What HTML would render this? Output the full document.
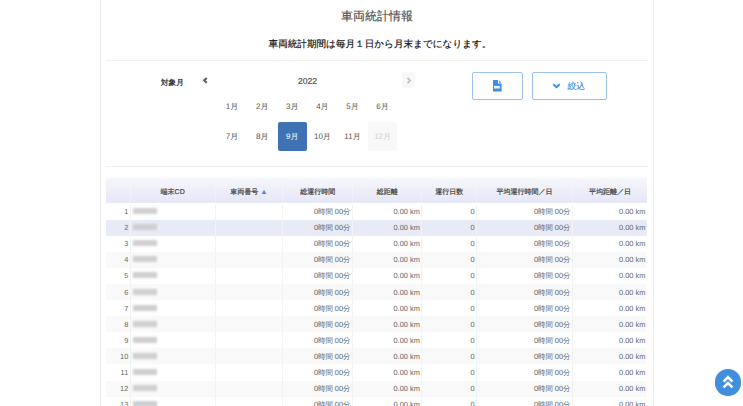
<!DOCTYPE html><html><head><meta charset="utf-8"><style>
*{box-sizing:border-box;margin:0;padding:0}
html,body{width:743px;height:406px;overflow:hidden;background:#fff;text-rendering:geometricPrecision;font-family:"Liberation Sans",sans-serif;position:relative}
.card{position:absolute;left:100px;top:-10px;width:554px;height:430px;border-left:1px solid #ebebeb;border-right:1px solid #ebebeb}
.abs{position:absolute;white-space:nowrap}
.title{left:100px;width:554px;text-align:center;top:8px;font-size:12px;color:#4d4d4d;-webkit-text-stroke:0.15px #4d4d4d;line-height:16px}
.sub{left:103px;width:554px;text-align:center;top:37.5px;font-size:9.6px;color:#111;-webkit-text-stroke:0.18px #111;line-height:13px}
.hr{position:absolute;left:106px;width:542px;height:1px;background:#eee}
.lbl{font-size:7.6px;font-weight:bold;color:#3a3a3a;line-height:10px}
.yr{font-size:8.6px;color:#555;-webkit-text-stroke:0.2px #555;line-height:10px}
.mo{position:absolute;width:29px;height:29px;border-radius:2px;font-size:8px;color:#555;text-align:center;line-height:29px}
.mo.sel{background:#3f72b3;color:#fff}
.mo.dis{background:#f8f8f8;color:#d2d2d2}
.btn{position:absolute;top:72px;height:27.5px;border:1px solid #9cc3ec;border-radius:2px;background:#fff}
.th{position:absolute;top:178.4px;height:25.1px;background:linear-gradient(#f6f6fc,#e6e7f7);font-size:7px;color:#4a4a4a;-webkit-text-stroke:0.22px #4a4a4a;text-align:center;}
.hsep{position:absolute;width:1px;background:linear-gradient(#f8f8fc,#ececf8)}
.td{position:absolute;font-size:7.4px;color:#666;text-align:right;padding-right:2px}
.sep{position:absolute;width:1px;background:#f3f3f3}
.tri{color:#3a8ee6;font-size:7.4px;line-height:1px;-webkit-text-stroke:0}
.blur{position:absolute;left:2.5px;top:4.1px;width:24px;height:6px;filter:blur(0.9px);background:#cfcfd1}
</style></head><body><div class="card"></div>
<div class="abs title">車両統計情報</div>
<div class="abs sub">車両統計期間は毎月１日から月末までになります。</div>
<div class="hr" style="top:59.6px;height:1.3px;background:#f0f0f0"></div>
<div class="hr" style="top:165.8px;height:1.3px;background:#f0f0f0"></div>
<div class="abs lbl" style="left:161px;top:78.2px">対象月</div>
<svg class="abs" style="left:202px;top:77px" width="7" height="7" viewBox="0 0 7 7"><path d="M4.8 0.9 L2.1 3.3 L4.8 5.7" fill="none" stroke="#5a5f63" stroke-width="2"/></svg>
<div class="abs yr" style="left:298px;top:75.5px">2022</div>
<div class="abs" style="left:402.2px;top:72px;width:13px;height:15.8px;background:#f8f8f8;border-radius:2px"></div>
<svg class="abs" style="left:405.5px;top:76.5px" width="6" height="7" viewBox="0 0 6 7"><path d="M1.5 0.8 L4.2 3.5 L1.5 6.2" fill="none" stroke="#c2c2c2" stroke-width="1.8"/></svg>
<div class="mo" style="left:217.6px;top:91.5px">1月</div>
<div class="mo" style="left:247.7px;top:91.5px">2月</div>
<div class="mo" style="left:277.8px;top:91.5px">3月</div>
<div class="mo" style="left:307.9px;top:91.5px">4月</div>
<div class="mo" style="left:338.0px;top:91.5px">5月</div>
<div class="mo" style="left:368.1px;top:91.5px">6月</div>
<div class="mo" style="left:217.6px;top:122.3px">7月</div>
<div class="mo" style="left:247.7px;top:122.3px">8月</div>
<div class="mo sel" style="left:277.8px;top:122.3px">9月</div>
<div class="mo" style="left:307.9px;top:122.3px">10月</div>
<div class="mo" style="left:338.0px;top:122.3px">11月</div>
<div class="mo dis" style="left:368.1px;top:122.3px">12月</div>
<div class="btn" style="left:472px;width:50.5px"></div>
<svg class="abs" style="left:493px;top:80.2px" width="8.6" height="11.6" viewBox="0 0 8.6 11.6"><path d="M0 0 L5 0 L5 3.6 L8.6 3.6 L8.6 11.6 L0 11.6 Z" fill="#3a8ee6"/><path d="M5.9 0.2 L8.4 2.7 L5.9 2.7 Z" fill="#3a8ee6"/><rect x="1" y="5.9" width="5.8" height="2.6" fill="#fff"/><path d="M2 6.6 v1.2 M3.9 6.6 v1.2 M5.8 6.6 v1.2" stroke="#9cc5f0" stroke-width="0.7"/></svg>
<div class="btn" style="left:532px;width:74.5px"></div>
<svg class="abs" style="left:552px;top:83px" width="9" height="6" viewBox="0 0 9 6"><path d="M1.3 1.3 L4.5 4.3 L7.7 1.3" fill="none" stroke="#3a8ee6" stroke-width="1.9"/></svg>
<div class="abs" style="left:567.5px;top:80.5px;font-size:8.8px;color:#3a8ee6;-webkit-text-stroke:0.15px #3a8ee6;line-height:11px">絞込</div>
<div class="th" style="left:106.2px;width:24.1px;line-height:20.7px;padding-top:4.4px"></div>
<div class="th" style="left:130.3px;width:84.7px;line-height:20.7px;padding-top:4.4px">端末CD</div>
<div class="th" style="left:215.0px;width:67.8px;line-height:20.7px;padding-top:4.4px">車両番号 <span class="tri">▲</span></div>
<div class="th" style="left:282.8px;width:69.7px;line-height:20.7px;padding-top:4.4px">総運行時間</div>
<div class="th" style="left:352.5px;width:69.3px;line-height:20.7px;padding-top:4.4px">総距離</div>
<div class="th" style="left:421.8px;width:54.8px;line-height:20.7px;padding-top:4.4px">運行日数</div>
<div class="th" style="left:476.6px;width:95.9px;line-height:20.7px;padding-top:4.4px">平均運行時間／日</div>
<div class="th" style="left:572.5px;width:74.9px;line-height:20.7px;padding-top:4.4px">平均距離／日</div>
<div class="abs" style="left:106.2px;width:541.2px;top:203.5px;height:16.1px;background:#fff;"></div>
<div class="td" style="left:106.2px;width:24.1px;top:204.0px;height:16.1px;line-height:16.1px;">1</div>
<div class="td" style="left:130.3px;width:84.7px;top:204.0px;height:16.1px;line-height:16.1px;text-align:left;padding-left:2px;"><span class="blur"></span></div>
<div class="td" style="left:215.0px;width:67.8px;top:204.0px;height:16.1px;line-height:16.1px;"></div>
<div class="td" style="left:282.8px;width:69.7px;top:204.0px;height:16.1px;line-height:16.1px;">0時間 00分</div>
<div class="td" style="left:352.5px;width:69.3px;top:204.0px;height:16.1px;line-height:16.1px;">0.00 km</div>
<div class="td" style="left:421.8px;width:54.8px;top:204.0px;height:16.1px;line-height:16.1px;">0</div>
<div class="td" style="left:476.6px;width:95.9px;top:204.0px;height:16.1px;line-height:16.1px;">0時間 00分</div>
<div class="td" style="left:572.5px;width:74.9px;top:204.0px;height:16.1px;line-height:16.1px;">0.00 km</div>
<div class="abs" style="left:106.2px;width:541.2px;top:219.6px;height:16.1px;background:#e8eaf6;"></div>
<div class="td" style="left:106.2px;width:24.1px;top:220.1px;height:16.1px;line-height:16.1px;">2</div>
<div class="td" style="left:130.3px;width:84.7px;top:220.1px;height:16.1px;line-height:16.1px;text-align:left;padding-left:2px;"><span class="blur"></span></div>
<div class="td" style="left:215.0px;width:67.8px;top:220.1px;height:16.1px;line-height:16.1px;"></div>
<div class="td" style="left:282.8px;width:69.7px;top:220.1px;height:16.1px;line-height:16.1px;">0時間 00分</div>
<div class="td" style="left:352.5px;width:69.3px;top:220.1px;height:16.1px;line-height:16.1px;">0.00 km</div>
<div class="td" style="left:421.8px;width:54.8px;top:220.1px;height:16.1px;line-height:16.1px;">0</div>
<div class="td" style="left:476.6px;width:95.9px;top:220.1px;height:16.1px;line-height:16.1px;">0時間 00分</div>
<div class="td" style="left:572.5px;width:74.9px;top:220.1px;height:16.1px;line-height:16.1px;">0.00 km</div>
<div class="abs" style="left:106.2px;width:541.2px;top:235.7px;height:16.1px;background:#fff;"></div>
<div class="td" style="left:106.2px;width:24.1px;top:236.2px;height:16.1px;line-height:16.1px;">3</div>
<div class="td" style="left:130.3px;width:84.7px;top:236.2px;height:16.1px;line-height:16.1px;text-align:left;padding-left:2px;"><span class="blur"></span></div>
<div class="td" style="left:215.0px;width:67.8px;top:236.2px;height:16.1px;line-height:16.1px;"></div>
<div class="td" style="left:282.8px;width:69.7px;top:236.2px;height:16.1px;line-height:16.1px;">0時間 00分</div>
<div class="td" style="left:352.5px;width:69.3px;top:236.2px;height:16.1px;line-height:16.1px;">0.00 km</div>
<div class="td" style="left:421.8px;width:54.8px;top:236.2px;height:16.1px;line-height:16.1px;">0</div>
<div class="td" style="left:476.6px;width:95.9px;top:236.2px;height:16.1px;line-height:16.1px;">0時間 00分</div>
<div class="td" style="left:572.5px;width:74.9px;top:236.2px;height:16.1px;line-height:16.1px;">0.00 km</div>
<div class="abs" style="left:106.2px;width:541.2px;top:251.8px;height:16.1px;background:#f9f9f9;"></div>
<div class="td" style="left:106.2px;width:24.1px;top:252.3px;height:16.1px;line-height:16.1px;">4</div>
<div class="td" style="left:130.3px;width:84.7px;top:252.3px;height:16.1px;line-height:16.1px;text-align:left;padding-left:2px;"><span class="blur"></span></div>
<div class="td" style="left:215.0px;width:67.8px;top:252.3px;height:16.1px;line-height:16.1px;"></div>
<div class="td" style="left:282.8px;width:69.7px;top:252.3px;height:16.1px;line-height:16.1px;">0時間 00分</div>
<div class="td" style="left:352.5px;width:69.3px;top:252.3px;height:16.1px;line-height:16.1px;">0.00 km</div>
<div class="td" style="left:421.8px;width:54.8px;top:252.3px;height:16.1px;line-height:16.1px;">0</div>
<div class="td" style="left:476.6px;width:95.9px;top:252.3px;height:16.1px;line-height:16.1px;">0時間 00分</div>
<div class="td" style="left:572.5px;width:74.9px;top:252.3px;height:16.1px;line-height:16.1px;">0.00 km</div>
<div class="abs" style="left:106.2px;width:541.2px;top:267.9px;height:16.1px;background:#fff;"></div>
<div class="td" style="left:106.2px;width:24.1px;top:268.4px;height:16.1px;line-height:16.1px;">5</div>
<div class="td" style="left:130.3px;width:84.7px;top:268.4px;height:16.1px;line-height:16.1px;text-align:left;padding-left:2px;"><span class="blur"></span></div>
<div class="td" style="left:215.0px;width:67.8px;top:268.4px;height:16.1px;line-height:16.1px;"></div>
<div class="td" style="left:282.8px;width:69.7px;top:268.4px;height:16.1px;line-height:16.1px;">0時間 00分</div>
<div class="td" style="left:352.5px;width:69.3px;top:268.4px;height:16.1px;line-height:16.1px;">0.00 km</div>
<div class="td" style="left:421.8px;width:54.8px;top:268.4px;height:16.1px;line-height:16.1px;">0</div>
<div class="td" style="left:476.6px;width:95.9px;top:268.4px;height:16.1px;line-height:16.1px;">0時間 00分</div>
<div class="td" style="left:572.5px;width:74.9px;top:268.4px;height:16.1px;line-height:16.1px;">0.00 km</div>
<div class="abs" style="left:106.2px;width:541.2px;top:284.0px;height:16.1px;background:#f9f9f9;"></div>
<div class="td" style="left:106.2px;width:24.1px;top:284.5px;height:16.1px;line-height:16.1px;">6</div>
<div class="td" style="left:130.3px;width:84.7px;top:284.5px;height:16.1px;line-height:16.1px;text-align:left;padding-left:2px;"><span class="blur"></span></div>
<div class="td" style="left:215.0px;width:67.8px;top:284.5px;height:16.1px;line-height:16.1px;"></div>
<div class="td" style="left:282.8px;width:69.7px;top:284.5px;height:16.1px;line-height:16.1px;">0時間 00分</div>
<div class="td" style="left:352.5px;width:69.3px;top:284.5px;height:16.1px;line-height:16.1px;">0.00 km</div>
<div class="td" style="left:421.8px;width:54.8px;top:284.5px;height:16.1px;line-height:16.1px;">0</div>
<div class="td" style="left:476.6px;width:95.9px;top:284.5px;height:16.1px;line-height:16.1px;">0時間 00分</div>
<div class="td" style="left:572.5px;width:74.9px;top:284.5px;height:16.1px;line-height:16.1px;">0.00 km</div>
<div class="abs" style="left:106.2px;width:541.2px;top:300.1px;height:16.1px;background:#fff;"></div>
<div class="td" style="left:106.2px;width:24.1px;top:300.6px;height:16.1px;line-height:16.1px;">7</div>
<div class="td" style="left:130.3px;width:84.7px;top:300.6px;height:16.1px;line-height:16.1px;text-align:left;padding-left:2px;"><span class="blur"></span></div>
<div class="td" style="left:215.0px;width:67.8px;top:300.6px;height:16.1px;line-height:16.1px;"></div>
<div class="td" style="left:282.8px;width:69.7px;top:300.6px;height:16.1px;line-height:16.1px;">0時間 00分</div>
<div class="td" style="left:352.5px;width:69.3px;top:300.6px;height:16.1px;line-height:16.1px;">0.00 km</div>
<div class="td" style="left:421.8px;width:54.8px;top:300.6px;height:16.1px;line-height:16.1px;">0</div>
<div class="td" style="left:476.6px;width:95.9px;top:300.6px;height:16.1px;line-height:16.1px;">0時間 00分</div>
<div class="td" style="left:572.5px;width:74.9px;top:300.6px;height:16.1px;line-height:16.1px;">0.00 km</div>
<div class="abs" style="left:106.2px;width:541.2px;top:316.2px;height:16.1px;background:#f9f9f9;"></div>
<div class="td" style="left:106.2px;width:24.1px;top:316.7px;height:16.1px;line-height:16.1px;">8</div>
<div class="td" style="left:130.3px;width:84.7px;top:316.7px;height:16.1px;line-height:16.1px;text-align:left;padding-left:2px;"><span class="blur"></span></div>
<div class="td" style="left:215.0px;width:67.8px;top:316.7px;height:16.1px;line-height:16.1px;"></div>
<div class="td" style="left:282.8px;width:69.7px;top:316.7px;height:16.1px;line-height:16.1px;">0時間 00分</div>
<div class="td" style="left:352.5px;width:69.3px;top:316.7px;height:16.1px;line-height:16.1px;">0.00 km</div>
<div class="td" style="left:421.8px;width:54.8px;top:316.7px;height:16.1px;line-height:16.1px;">0</div>
<div class="td" style="left:476.6px;width:95.9px;top:316.7px;height:16.1px;line-height:16.1px;">0時間 00分</div>
<div class="td" style="left:572.5px;width:74.9px;top:316.7px;height:16.1px;line-height:16.1px;">0.00 km</div>
<div class="abs" style="left:106.2px;width:541.2px;top:332.3px;height:16.1px;background:#fff;"></div>
<div class="td" style="left:106.2px;width:24.1px;top:332.8px;height:16.1px;line-height:16.1px;">9</div>
<div class="td" style="left:130.3px;width:84.7px;top:332.8px;height:16.1px;line-height:16.1px;text-align:left;padding-left:2px;"><span class="blur"></span></div>
<div class="td" style="left:215.0px;width:67.8px;top:332.8px;height:16.1px;line-height:16.1px;"></div>
<div class="td" style="left:282.8px;width:69.7px;top:332.8px;height:16.1px;line-height:16.1px;">0時間 00分</div>
<div class="td" style="left:352.5px;width:69.3px;top:332.8px;height:16.1px;line-height:16.1px;">0.00 km</div>
<div class="td" style="left:421.8px;width:54.8px;top:332.8px;height:16.1px;line-height:16.1px;">0</div>
<div class="td" style="left:476.6px;width:95.9px;top:332.8px;height:16.1px;line-height:16.1px;">0時間 00分</div>
<div class="td" style="left:572.5px;width:74.9px;top:332.8px;height:16.1px;line-height:16.1px;">0.00 km</div>
<div class="abs" style="left:106.2px;width:541.2px;top:348.4px;height:16.1px;background:#f9f9f9;"></div>
<div class="td" style="left:106.2px;width:24.1px;top:348.9px;height:16.1px;line-height:16.1px;">10</div>
<div class="td" style="left:130.3px;width:84.7px;top:348.9px;height:16.1px;line-height:16.1px;text-align:left;padding-left:2px;"><span class="blur"></span></div>
<div class="td" style="left:215.0px;width:67.8px;top:348.9px;height:16.1px;line-height:16.1px;"></div>
<div class="td" style="left:282.8px;width:69.7px;top:348.9px;height:16.1px;line-height:16.1px;">0時間 00分</div>
<div class="td" style="left:352.5px;width:69.3px;top:348.9px;height:16.1px;line-height:16.1px;">0.00 km</div>
<div class="td" style="left:421.8px;width:54.8px;top:348.9px;height:16.1px;line-height:16.1px;">0</div>
<div class="td" style="left:476.6px;width:95.9px;top:348.9px;height:16.1px;line-height:16.1px;">0時間 00分</div>
<div class="td" style="left:572.5px;width:74.9px;top:348.9px;height:16.1px;line-height:16.1px;">0.00 km</div>
<div class="abs" style="left:106.2px;width:541.2px;top:364.5px;height:16.1px;background:#fff;"></div>
<div class="td" style="left:106.2px;width:24.1px;top:365.0px;height:16.1px;line-height:16.1px;">11</div>
<div class="td" style="left:130.3px;width:84.7px;top:365.0px;height:16.1px;line-height:16.1px;text-align:left;padding-left:2px;"><span class="blur"></span></div>
<div class="td" style="left:215.0px;width:67.8px;top:365.0px;height:16.1px;line-height:16.1px;"></div>
<div class="td" style="left:282.8px;width:69.7px;top:365.0px;height:16.1px;line-height:16.1px;">0時間 00分</div>
<div class="td" style="left:352.5px;width:69.3px;top:365.0px;height:16.1px;line-height:16.1px;">0.00 km</div>
<div class="td" style="left:421.8px;width:54.8px;top:365.0px;height:16.1px;line-height:16.1px;">0</div>
<div class="td" style="left:476.6px;width:95.9px;top:365.0px;height:16.1px;line-height:16.1px;">0時間 00分</div>
<div class="td" style="left:572.5px;width:74.9px;top:365.0px;height:16.1px;line-height:16.1px;">0.00 km</div>
<div class="abs" style="left:106.2px;width:541.2px;top:380.6px;height:16.1px;background:#f9f9f9;"></div>
<div class="td" style="left:106.2px;width:24.1px;top:381.1px;height:16.1px;line-height:16.1px;">12</div>
<div class="td" style="left:130.3px;width:84.7px;top:381.1px;height:16.1px;line-height:16.1px;text-align:left;padding-left:2px;"><span class="blur"></span></div>
<div class="td" style="left:215.0px;width:67.8px;top:381.1px;height:16.1px;line-height:16.1px;"></div>
<div class="td" style="left:282.8px;width:69.7px;top:381.1px;height:16.1px;line-height:16.1px;">0時間 00分</div>
<div class="td" style="left:352.5px;width:69.3px;top:381.1px;height:16.1px;line-height:16.1px;">0.00 km</div>
<div class="td" style="left:421.8px;width:54.8px;top:381.1px;height:16.1px;line-height:16.1px;">0</div>
<div class="td" style="left:476.6px;width:95.9px;top:381.1px;height:16.1px;line-height:16.1px;">0時間 00分</div>
<div class="td" style="left:572.5px;width:74.9px;top:381.1px;height:16.1px;line-height:16.1px;">0.00 km</div>
<div class="abs" style="left:106.2px;width:541.2px;top:396.7px;height:16.1px;background:#fff;"></div>
<div class="td" style="left:106.2px;width:24.1px;top:397.2px;height:16.1px;line-height:16.1px;">13</div>
<div class="td" style="left:130.3px;width:84.7px;top:397.2px;height:16.1px;line-height:16.1px;text-align:left;padding-left:2px;"><span class="blur"></span></div>
<div class="td" style="left:215.0px;width:67.8px;top:397.2px;height:16.1px;line-height:16.1px;"></div>
<div class="td" style="left:282.8px;width:69.7px;top:397.2px;height:16.1px;line-height:16.1px;">0時間 00分</div>
<div class="td" style="left:352.5px;width:69.3px;top:397.2px;height:16.1px;line-height:16.1px;">0.00 km</div>
<div class="td" style="left:421.8px;width:54.8px;top:397.2px;height:16.1px;line-height:16.1px;">0</div>
<div class="td" style="left:476.6px;width:95.9px;top:397.2px;height:16.1px;line-height:16.1px;">0時間 00分</div>
<div class="td" style="left:572.5px;width:74.9px;top:397.2px;height:16.1px;line-height:16.1px;">0.00 km</div>
<div class="hsep" style="left:129.8px;top:178.4px;height:25.1px"></div>
<div class="sep" style="left:129.8px;top:203.5px;height:300.0px"></div>
<div class="hsep" style="left:214.5px;top:178.4px;height:25.1px"></div>
<div class="sep" style="left:214.5px;top:203.5px;height:300.0px"></div>
<div class="hsep" style="left:282.3px;top:178.4px;height:25.1px"></div>
<div class="sep" style="left:282.3px;top:203.5px;height:300.0px"></div>
<div class="hsep" style="left:352.0px;top:178.4px;height:25.1px"></div>
<div class="sep" style="left:352.0px;top:203.5px;height:300.0px"></div>
<div class="hsep" style="left:421.3px;top:178.4px;height:25.1px"></div>
<div class="sep" style="left:421.3px;top:203.5px;height:300.0px"></div>
<div class="hsep" style="left:476.1px;top:178.4px;height:25.1px"></div>
<div class="sep" style="left:476.1px;top:203.5px;height:300.0px"></div>
<div class="hsep" style="left:572.0px;top:178.4px;height:25.1px"></div>
<div class="sep" style="left:572.0px;top:203.5px;height:300.0px"></div>
<div class="abs" style="left:714.7px;top:369px;width:26.8px;height:26.8px;border-radius:50%;background:#3f8fdd;box-shadow:0 0 2px rgba(0,0,0,0.12)"></div>
<svg class="abs" style="left:722px;top:374.5px" width="12" height="14" viewBox="0 0 12 14"><path d="M1.6 6.6 L6 2.2 L10.4 6.6 M1.6 12.4 L6 8 L10.4 12.4" fill="none" stroke="#fff" stroke-width="2.6"/></svg></body></html>
